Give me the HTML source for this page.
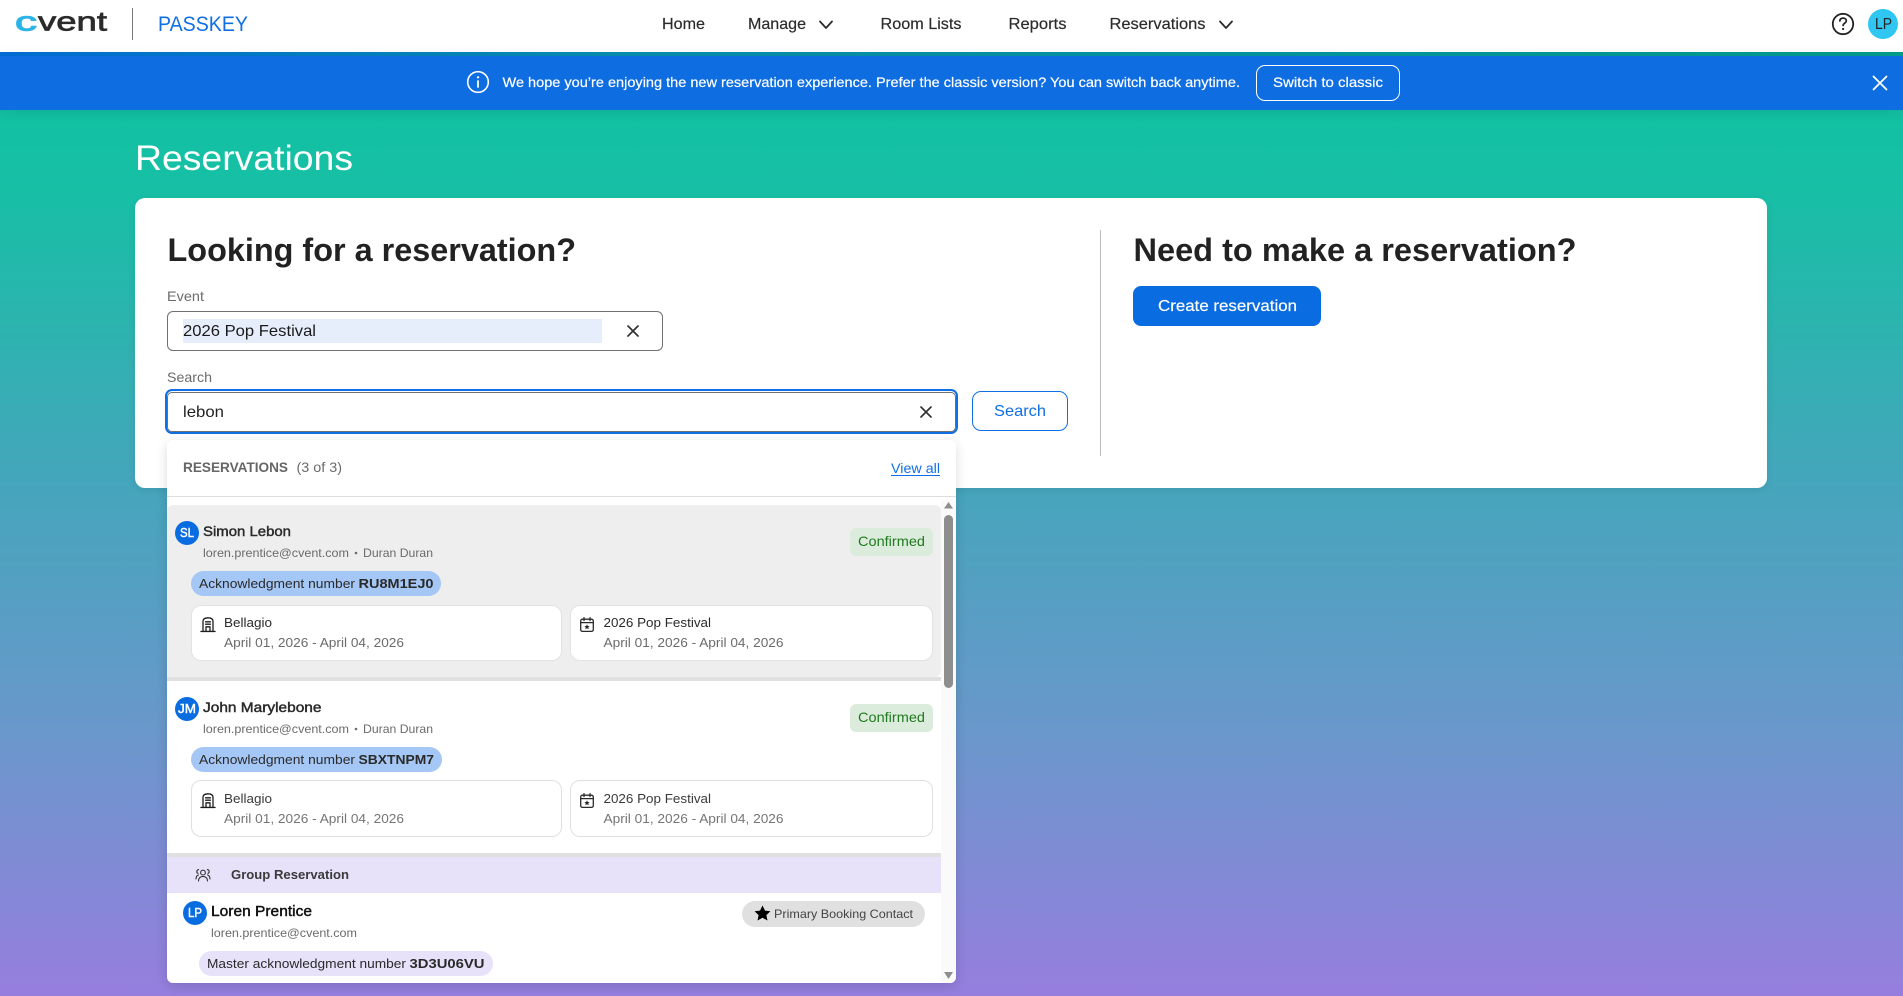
<!DOCTYPE html>
<html lang="en">
<head>
<meta charset="utf-8">
<title>Reservations</title>
<style>
html,body{margin:0;padding:0;width:1903px;height:996px;overflow:hidden}
body{position:relative;background:linear-gradient(180deg,#0CC4A0 0,#17BFA5 190px,#46A5BC 490px,#6B97CC 740px,#967EDE 996px);font-family:"Liberation Sans",sans-serif}
.b{position:absolute;box-sizing:border-box}
svg.t{position:absolute;left:0;top:0;z-index:5}
svg.t text{font-family:"Liberation Sans",sans-serif;white-space:pre}
.m{stroke:currentColor;stroke-width:.45px}
.s{stroke:currentColor;stroke-width:.18px}
.ic{fill:none;stroke-linecap:round;stroke-linejoin:round}
</style>
</head>
<body>
<!-- header -->
<div class="b" style="left:0;top:0;width:1903px;height:52px;background:#fff"></div>
<div class="b" style="left:0;top:52px;width:1903px;height:4px;background:linear-gradient(90deg,#006fd9 0,#0890b0 33%,#009e8e 100%)"></div>
<div class="b" style="left:132px;top:8px;width:1px;height:32px;background:#777"></div>
<div class="b" style="left:1868px;top:9px;width:30px;height:30px;border-radius:50%;background:#30c6f2"></div>
<!-- banner -->
<div class="b" style="left:0;top:56px;width:1903px;height:54px;background:#0f6de2;box-shadow:0 2px 14px rgba(0,0,0,.1)"></div>
<div class="b" style="left:1256px;top:65px;width:144px;height:36px;border:1px solid #fff;border-radius:9px"></div>
<!-- main card -->
<div class="b" style="left:135px;top:198px;width:1632px;height:290px;background:#fff;border-radius:10px;box-shadow:0 2px 8px rgba(0,0,0,.08)"></div>
<div class="b" style="left:167px;top:311px;width:496px;height:40px;border:1px solid #707070;border-radius:6px"></div>
<div class="b" style="left:183px;top:319px;width:419px;height:24px;background:#e6eefb"></div>
<div class="b" style="left:165px;top:389px;width:793px;height:45px;border:2px solid #0f6fe3;border-radius:7px"></div>
<div class="b" style="left:167px;top:391.5px;width:789px;height:40px;border:1px solid #707070;border-radius:5px"></div>
<div class="b" style="left:972px;top:391px;width:96px;height:40px;border:1px solid #0f6fe3;border-radius:9px"></div>
<div class="b" style="left:1100px;top:230px;width:1px;height:226px;background:#bbb"></div>
<div class="b" style="left:1133px;top:286px;width:188px;height:40px;background:#0a6ce1;border-radius:8px"></div>
<!-- dropdown -->
<div class="b" style="left:167px;top:440px;width:789px;height:543px;background:#fff;border-radius:6px;box-shadow:0 3px 12px rgba(0,0,0,.14)"></div>
<div class="b" style="left:941px;top:500px;width:15px;height:483px;background:#fafafa;border-radius:0 0 6px 0"></div>
<div class="b" style="left:167px;top:496px;width:789px;height:1px;background:#ddd"></div>
<div class="b" style="left:167px;top:505px;width:774px;height:172px;background:#eee;border-radius:6px 6px 6px 0"></div>
<div class="b" style="left:167px;top:677px;width:774px;height:4px;background:#e0e0e0"></div>
<div class="b" style="left:167px;top:853px;width:774px;height:4px;background:#e0e0e0"></div>
<div class="b" style="left:167px;top:857px;width:774px;height:36px;background:#e7e2fa"></div>
<div class="b" style="left:944px;top:515px;width:9px;height:173px;background:#8e8e8e;border-radius:5px"></div>
<!-- item 1 -->
<div class="b" style="left:175px;top:521px;width:24px;height:24px;border-radius:50%;background:#0a6ce1"></div>
<div class="b" style="left:850px;top:528px;width:83px;height:28px;background:#dcecdc;border-radius:6px"></div>
<div class="b" style="left:191px;top:571px;width:250px;height:25px;background:#a5c7f5;border-radius:12.5px"></div>
<div class="b" style="left:191px;top:605px;width:371px;height:56px;background:#fff;border:1px solid #e2e2e2;border-radius:10px"></div>
<div class="b" style="left:570px;top:605px;width:363px;height:56px;background:#fff;border:1px solid #e2e2e2;border-radius:10px"></div>
<!-- item 2 -->
<div class="b" style="left:175px;top:697px;width:24px;height:24px;border-radius:50%;background:#0a6ce1"></div>
<div class="b" style="left:850px;top:704px;width:83px;height:28px;background:#dcecdc;border-radius:6px"></div>
<div class="b" style="left:191px;top:747px;width:251px;height:25px;background:#a5c7f5;border-radius:12.5px"></div>
<div class="b" style="left:191px;top:780px;width:371px;height:57px;background:#fff;border:1px solid #e0e0e0;border-radius:10px"></div>
<div class="b" style="left:570px;top:780px;width:363px;height:57px;background:#fff;border:1px solid #e0e0e0;border-radius:10px"></div>
<!-- group item -->
<div class="b" style="left:183px;top:901px;width:24px;height:24px;border-radius:50%;background:#0a6ce1"></div>
<div class="b" style="left:742px;top:901px;width:183px;height:26px;background:#e0e0e0;border-radius:13px"></div>
<div class="b" style="left:199px;top:951px;width:294px;height:25px;background:#e7e2fa;border-radius:12.5px"></div>

<svg class="t" width="1903" height="996" viewBox="0 0 1903 996" xmlns="http://www.w3.org/2000/svg">
  <defs>
    <g id="hotel" class="ic" stroke="#1c1c1c" stroke-width="1.3">
      <path d="M2 14.2V4.4C2 2 4 .8 7 .8s5 1.2 5 3.6v9.8"/>
      <path d="M0 14.4h14" stroke-width="1.4"/>
      <path d="M4.6 4.8h4.8M4.6 7.2h4.8M5 14V9.8h4V14"/>
    </g>
    <g id="cal">
      <g class="ic" stroke="#2a2a2a" stroke-width="1.3">
        <rect x=".7" y="2.2" width="12.6" height="12.2" rx="1.8"/>
        <path d="M.8 5.6h12.4M4 .6v3M10 .6v3"/>
      </g>
      <polygon fill="#2a2a2a" points="7,7.2 7.8,9 9.7,9.2 8.3,10.4 8.7,12.3 7,11.3 5.3,12.3 5.7,10.4 4.3,9.2 6.2,9"/>
    </g>
  </defs>

  <!-- logo -->
  <text x="15" y="30.5" font-size="27" fill="#2cb3e8" class="m" color="#2cb3e8" style="stroke-width:1px" textLength="22" lengthAdjust="spacingAndGlyphs">c</text>
  <text x="38" y="30.5" font-size="27" fill="#2b2b2b" class="m" color="#2b2b2b" style="stroke-width:.7px" textLength="69" lengthAdjust="spacingAndGlyphs">vent</text>
  <text x="158" y="31" font-size="21" fill="#0f6fe3" textLength="90" lengthAdjust="spacingAndGlyphs">PASSKEY</text>

  <!-- nav -->
  <g font-size="16" fill="#2b2b2b" color="#2b2b2b" class="s">
    <text x="662" y="29" textLength="43" lengthAdjust="spacingAndGlyphs">Home</text>
    <text x="748" y="29" textLength="58" lengthAdjust="spacingAndGlyphs">Manage</text>
    <text x="880.5" y="29" textLength="81" lengthAdjust="spacingAndGlyphs">Room Lists</text>
    <text x="1008.5" y="29" textLength="58" lengthAdjust="spacingAndGlyphs">Reports</text>
    <text x="1109.5" y="29" textLength="96" lengthAdjust="spacingAndGlyphs">Reservations</text>
  </g>
  <path class="ic" d="M820 21.5l6 6.5 6-6.5M1220 21.5l6 6.5 6-6.5" stroke="#2b2b2b" stroke-width="1.8"/>

  <!-- help + avatar -->
  <circle class="ic" cx="1843" cy="24" r="10.2" stroke="#222" stroke-width="1.8"/>
  <path class="ic" d="M1839.8 21c.2-1.9 1.5-2.9 3.3-2.9 1.9 0 3.2 1.1 3.2 2.7 0 2.4-3.2 2.4-3.2 4.7" stroke="#222" stroke-width="1.7"/>
  <circle cx="1843.1" cy="29" r="1.1" fill="#222"/>
  <text x="1875" y="29" font-size="16" fill="#222" textLength="17" lengthAdjust="spacingAndGlyphs">LP</text>

  <!-- banner -->
  <circle class="ic" cx="478" cy="82" r="10.3" stroke="#fff" stroke-width="1.6"/>
  <path class="ic" d="M478 81v6" stroke="#fff" stroke-width="1.8"/>
  <circle cx="478" cy="77.3" r="1.2" fill="#fff"/>
  <text x="502.5" y="87" font-size="14" fill="#fff" color="#fff" class="s" textLength="737.5" lengthAdjust="spacingAndGlyphs">We hope you’re enjoying the new reservation experience. Prefer the classic version? You can switch back anytime.</text>
  <text x="1273" y="87" font-size="14" fill="#fff" class="s" color="#fff" textLength="110" lengthAdjust="spacingAndGlyphs">Switch to classic</text>
  <path class="ic" d="M1873.5 76.5l13 13M1886.5 76.5l-13 13" stroke="#fff" stroke-width="1.8"/>

  <!-- page title -->
  <text x="135" y="170" font-size="35" fill="#fff" textLength="218" lengthAdjust="spacingAndGlyphs">Reservations</text>

  <!-- left panel -->
  <text x="167.5" y="261" font-size="32" font-weight="700" fill="#222" textLength="408.5" lengthAdjust="spacingAndGlyphs">Looking for a reservation?</text>
  <text x="167" y="301" font-size="14" fill="#6b6b6b" textLength="37" lengthAdjust="spacingAndGlyphs">Event</text>
  <text x="183" y="336" font-size="16" fill="#1a1a1a" textLength="133" lengthAdjust="spacingAndGlyphs">2026 Pop Festival</text>
  <path class="ic" d="M628 326l10 10M638 326l-10 10" stroke="#333" stroke-width="1.7"/>
  <text x="167" y="382" font-size="14" fill="#6b6b6b" textLength="45" lengthAdjust="spacingAndGlyphs">Search</text>
  <text x="183" y="417" font-size="16" fill="#222" textLength="41" lengthAdjust="spacingAndGlyphs">lebon</text>
  <path class="ic" d="M921 407l10 10M931 407l-10 10" stroke="#333" stroke-width="1.7"/>
  <text x="994" y="416" font-size="16" fill="#0f6fe3" textLength="52" lengthAdjust="spacingAndGlyphs">Search</text>

  <!-- right panel -->
  <text x="1133.5" y="261" font-size="32" font-weight="700" fill="#222" textLength="443" lengthAdjust="spacingAndGlyphs">Need to make a reservation?</text>
  <text x="1158" y="311" font-size="16" fill="#fff" class="s" color="#fff" textLength="139" lengthAdjust="spacingAndGlyphs">Create reservation</text>

  <!-- dropdown head -->
  <text x="183" y="472" font-size="14" font-weight="700" fill="#666" textLength="105" lengthAdjust="spacingAndGlyphs">RESERVATIONS</text>
  <text x="296.5" y="472" font-size="14" fill="#6b6b6b" textLength="45.5" lengthAdjust="spacingAndGlyphs">(3 of 3)</text>
  <text x="891" y="473" font-size="14" fill="#0f6fe3" textLength="49" lengthAdjust="spacingAndGlyphs">View all</text>
  <rect x="891" y="475" width="49" height="1" fill="#0f6fe3"/>

  <!-- scroll arrows -->
  <polygon points="948.5,502 953,508.5 944,508.5" fill="#8e8e8e"/>
  <polygon points="944,972 953,972 948.5,979" fill="#8e8e8e"/>

  <!-- item 1 -->
  <text x="180" y="537" font-size="13" fill="#fff" class="m" color="#fff" textLength="14" lengthAdjust="spacingAndGlyphs">SL</text>
  <text x="203" y="536" font-size="14" fill="#2a2a2a" class="m" color="#2a2a2a" textLength="88" lengthAdjust="spacingAndGlyphs">Simon Lebon</text>
  <text x="203" y="557" font-size="12" fill="#6b6b6b" textLength="146" lengthAdjust="spacingAndGlyphs">loren.prentice@cvent.com</text>
  <circle cx="356" cy="553" r="1.3" fill="#6b6b6b"/>
  <text x="363" y="557" font-size="12" fill="#6b6b6b" textLength="70" lengthAdjust="spacingAndGlyphs">Duran Duran</text>
  <text x="858" y="546" font-size="14" fill="#1f7a1f" textLength="67" lengthAdjust="spacingAndGlyphs">Confirmed</text>
  <text x="199" y="588" font-size="13" fill="#2a2a2a" textLength="156" lengthAdjust="spacingAndGlyphs">Acknowledgment number</text>
  <text x="358.5" y="588" font-size="13" font-weight="700" fill="#2a2a2a" textLength="75" lengthAdjust="spacingAndGlyphs">RU8M1EJ0</text>
  <use href="#hotel" x="201" y="617"/>
  <text x="224" y="627" font-size="13" fill="#2a2a2a" textLength="48" lengthAdjust="spacingAndGlyphs">Bellagio</text>
  <text x="224" y="647" font-size="13" fill="#6b6b6b" textLength="180" lengthAdjust="spacingAndGlyphs">April 01, 2026 - April 04, 2026</text>
  <use href="#cal" x="580" y="617"/>
  <text x="603.5" y="627" font-size="13" fill="#2a2a2a" textLength="107.5" lengthAdjust="spacingAndGlyphs">2026 Pop Festival</text>
  <text x="603.5" y="647" font-size="13" fill="#6b6b6b" textLength="180" lengthAdjust="spacingAndGlyphs">April 01, 2026 - April 04, 2026</text>

  <!-- item 2 -->
  <text x="178" y="713" font-size="13" fill="#fff" class="m" color="#fff" textLength="18" lengthAdjust="spacingAndGlyphs">JM</text>
  <text x="203" y="712" font-size="14" fill="#2a2a2a" class="m" color="#2a2a2a" textLength="118.5" lengthAdjust="spacingAndGlyphs">John Marylebone</text>
  <text x="203" y="733" font-size="12" fill="#6b6b6b" textLength="146" lengthAdjust="spacingAndGlyphs">loren.prentice@cvent.com</text>
  <circle cx="356" cy="729" r="1.3" fill="#6b6b6b"/>
  <text x="363" y="733" font-size="12" fill="#6b6b6b" textLength="70" lengthAdjust="spacingAndGlyphs">Duran Duran</text>
  <text x="858" y="722" font-size="14" fill="#1f7a1f" textLength="67" lengthAdjust="spacingAndGlyphs">Confirmed</text>
  <text x="199" y="764" font-size="13" fill="#2a2a2a" textLength="156" lengthAdjust="spacingAndGlyphs">Acknowledgment number</text>
  <text x="358.5" y="764" font-size="13" font-weight="700" fill="#2a2a2a" textLength="75.5" lengthAdjust="spacingAndGlyphs">SBXTNPM7</text>
  <use href="#hotel" x="201" y="793"/>
  <text x="224" y="803" font-size="13" fill="#3a3a3a" textLength="48" lengthAdjust="spacingAndGlyphs">Bellagio</text>
  <text x="224" y="823" font-size="13" fill="#757575" textLength="180" lengthAdjust="spacingAndGlyphs">April 01, 2026 - April 04, 2026</text>
  <use href="#cal" x="580" y="793"/>
  <text x="603.5" y="803" font-size="13" fill="#3a3a3a" textLength="107.5" lengthAdjust="spacingAndGlyphs">2026 Pop Festival</text>
  <text x="603.5" y="823" font-size="13" fill="#757575" textLength="180" lengthAdjust="spacingAndGlyphs">April 01, 2026 - April 04, 2026</text>

  <!-- group -->
  <g class="ic" stroke="#333" stroke-width="1.1">
    <circle cx="203" cy="872.6" r="2.4"/>
    <path d="M198.5 881c0-2.8 2-4.6 4.5-4.6s4.5 1.8 4.5 4.6"/>
    <path d="M198.6 869.6a2 2 0 0 0-.6 3.8M207.4 869.6a2 2 0 0 1 .6 3.8M196 879c0-2 .8-3.4 2.4-4M210 879c0-2-.8-3.4-2.4-4"/>
  </g>
  <text x="231" y="879" font-size="13" font-weight="700" fill="#3a3a3a" textLength="118" lengthAdjust="spacingAndGlyphs">Group Reservation</text>
  <text x="188" y="917" font-size="13" fill="#fff" class="m" color="#fff" textLength="14" lengthAdjust="spacingAndGlyphs">LP</text>
  <text x="211" y="916" font-size="15" fill="#111" class="m" color="#111" textLength="101" lengthAdjust="spacingAndGlyphs">Loren Prentice</text>
  <text x="211" y="937" font-size="12" fill="#6b6b6b" textLength="146" lengthAdjust="spacingAndGlyphs">loren.prentice@cvent.com</text>
  <polygon fill="#000" points="762.5,905.5 765,910.6 770.4,911.3 766.4,915.1 767.5,920.5 762.5,917.8 757.5,920.5 758.6,915.1 754.6,911.3 760,910.6"/>
  <text x="774" y="918" font-size="12" fill="#444" textLength="139" lengthAdjust="spacingAndGlyphs">Primary Booking Contact</text>
  <text x="207" y="968" font-size="13" fill="#2a2a2a" textLength="199" lengthAdjust="spacingAndGlyphs">Master acknowledgment number</text>
  <text x="409.5" y="968" font-size="13" font-weight="700" fill="#2a2a2a" textLength="75" lengthAdjust="spacingAndGlyphs">3D3U06VU</text>
</svg>
</body>
</html>
